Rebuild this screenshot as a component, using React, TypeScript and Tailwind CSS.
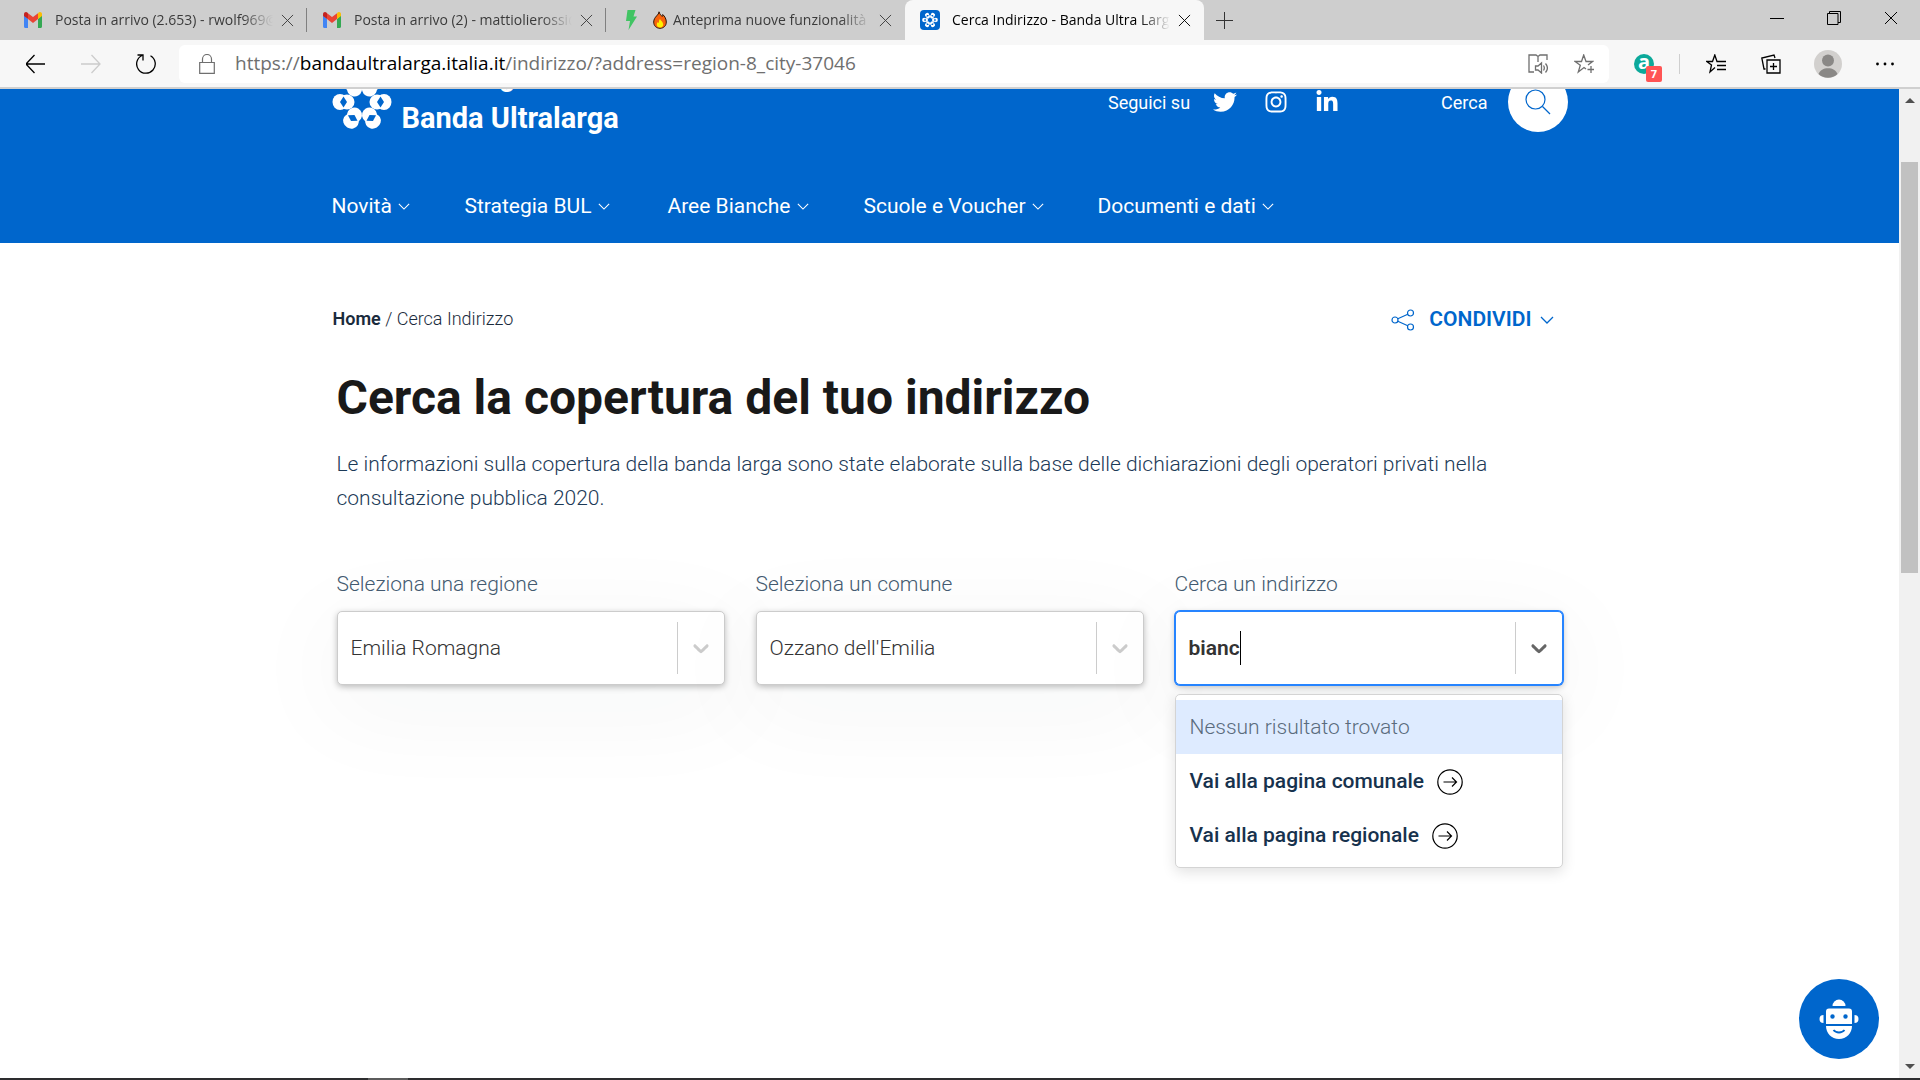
import type { ReactNode } from "react"
import clsx from "clsx"
import { FaInstagram, FaLinkedinIn, FaTwitter } from "react-icons/fa"

const GmailIcon = () => (
  <svg viewBox="0 0 20 16" className="w-[20px] h-[16px]">
    <path d="M1 3v11.5c0 .8.6 1.5 1.4 1.5H5V7z" fill="#4285f4" />
    <path d="M15 7v9h2.6c.8 0 1.4-.7 1.4-1.5V3z" fill="#34a853" />
    <path d="M15 1.6V7l4-3V2.2C19 .4 17-.6 15.6.6z" fill="#fbbc04" />
    <path d="M5 7V1.2l5 3.9 5-3.9V7l-5 4z" fill="#ea4335" />
    <path d="M1 2.2V4l4 3V1.2L4.4.6C3-.6 1 .4 1 2.2z" fill="#c5221f" />
  </svg>
)

const BoltIcon = () => (
  <svg viewBox="0 0 20 20" className="w-5 h-5">
    <path d="M6.500 0h8l-2 6.500h3.500L7.500 20l1.500-9H5z" fill="#41c463" />
  </svg>
)

const FlameIcon = () => (
  <svg viewBox="0 0 14 18" className="w-[14px] h-[18px] shrink-0">
    <path d="M6 .8c.6 2.300 2 3.200 3.200 4.700.5-.5.6-1.200.5-2 2.200 1.800 3.600 4.700 3.600 7.600 0 3.700-2.700 6.200-6.300 6.200S.7 14.800.7 11.100c0-2.800 1.400-4.500 2.900-6.200C4.800 3.600 5.900 2.500 6 .8z" fill="#f7630c" stroke="#2b1205" strokeWidth="1" />
    <path d="M7 8c.5 1.700 3.200 2.800 3.200 5.400 0 1.900-1.400 3.100-3.200 3.100s-3.200-1.200-3.200-3c0-1.100.5-2 1.200-2.600.2.700.5 1 .9 1.200C5.700 10.600 6.200 9 7 8z" fill="#fff100" />
  </svg>
)

const petals = [0, 60, 120, 180, 240, 300]

const Flower = ({ className }: { className?: string }) => (
  <svg viewBox="-30 -30 60 60" className={className} fill="currentColor">
    {petals.map((a) => (
      <g key={a} transform={`rotate(${a})`}>
        <ellipse cx="15" cy="0" rx="7.500" ry="7.500" />
        <ellipse cx="22" cy="0" rx="7.500" ry="8" />
        <path d="M18.500-5.500L22 0l-3.500 5.500L15 0z" fill="#0066cc" />
      </g>
    ))}
  </svg>
)

const SiteFavicon = () => (
  <span className="flex items-center justify-center w-5 h-5 rounded-sm bg-[#0066cc] text-white">
    <Flower className="w-4 h-4" />
  </span>
)

const Cross = ({ className }: { className?: string }) => (
  <svg viewBox="0 0 14 14" className={className} fill="none" stroke="currentColor">
    <path d="M1 1l12 12M13 1L1 13" />
  </svg>
)

const ThinChevron = ({ className }: { className?: string }) => (
  <svg viewBox="0 0 14 8" className={className} fill="none" stroke="currentColor" strokeWidth="1.300">
    <path d="M1 1l6 6 6-6" />
  </svg>
)

const CircleArrow = () => (
  <svg viewBox="0 0 26 26" className="w-[26px] h-[26px]" fill="none" stroke="#000" strokeWidth="1.200">
    <circle cx="13" cy="13" r="12.200" />
    <path d="M6.500 13h13M15 8.500l4.500 4.500-4.500 4.500" />
  </svg>
)

const tabs = [
  { title: "Posta in arrivo (2.653) - rwolf969@gmail.com", icon: <GmailIcon /> },
  { title: "Posta in arrivo (2) - mattiolierossi@gmail.com", icon: <GmailIcon /> },
  { title: "Anteprima nuove funzionalità in arrivo", icon: <BoltIcon />, flame: true },
  { title: "Cerca Indirizzo - Banda Ultra Larga", icon: <SiteFavicon />, active: true },
]

const TabStrip = () => (
  <div className="flex items-stretch h-10 pl-2 bg-[#cecece]">
    {tabs.map((tab, i) => (
      <div
        key={tab.title}
        className={clsx(
          "relative flex items-center gap-3 w-[299px] pl-[15px] pr-[13px] text-sm",
          tab.active ? "bg-[#f7f7f7] rounded-t-lg text-black" : "text-[#3b3b3b]"
        )}
      >
        {tab.icon}
        <span className="flex flex-1 items-center gap-[6px] min-w-0 overflow-hidden whitespace-nowrap [mask-image:linear-gradient(to_right,black_86%,transparent)]">
          {tab.flame && <FlameIcon />}
          {tab.title}
        </span>
        <button aria-label="Chiudi scheda" className="-ml-1">
          <Cross className="w-[13px] h-[13px]" />
        </button>
        {i < 2 && <span className="absolute right-0 top-2 h-6 w-px bg-[#808080]" />}
      </div>
    ))}
    <button aria-label="Nuova scheda" className="px-[12px] text-[#333]">
      <svg viewBox="0 0 17 17" className="w-[17px] h-[17px]" stroke="currentColor">
        <path d="M8.500 0v17M0 8.500h17" />
      </svg>
    </button>
    <div className="flex flex-1 justify-end items-center gap-[43px] pr-[22px] pb-1 text-black">
      <button aria-label="Riduci a icona" className="w-[14px] h-px bg-black" />
      <button aria-label="Ripristina">
        <svg viewBox="0 0 14 14" className="w-[14px] h-[14px]" fill="none" stroke="currentColor">
          <path d="M.5 2.500h10.500v11H.5zM2.500 2.500v-2h11v11h-2.500" />
        </svg>
      </button>
      <button aria-label="Chiudi">
        <Cross className="w-[14px] h-[14px]" />
      </button>
    </div>
  </div>
)

const ToolButton = ({ label, children, className }: { label: string; children: ReactNode; className?: string }) => (
  <button aria-label={label} className={clsx("shrink-0", className)}>
    <svg viewBox="0 0 20 20" className="w-5 h-5" fill="none" stroke="currentColor" strokeWidth="1.300">
      {children}
    </svg>
  </button>
)

const Toolbar = () => (
  <div className="flex items-center h-[49px] px-[26px] bg-[#f7f7f7] border-b-2 border-[#d0d0d0]">
    <div className="flex items-center gap-[35px] text-black">
      <ToolButton label="Indietro">
        <path d="M19 10H0M8.500 1L0 10l8.500 9" />
      </ToolButton>
      <ToolButton label="Avanti" className="text-[#cccccc]">
        <path d="M0 10h19M10.500 1l8.500 9-8.500 9" />
      </ToolButton>
      <ToolButton label="Aggiorna">
        <path d="M6 1.500a9.300 9.300 0 1 0 8.500.3M1.500 1H7v5.500" />
      </ToolButton>
    </div>
    <div className="flex flex-1 items-center h-[38px] ml-[23px] pl-[20px] pr-[15px] rounded-md bg-white text-[#6f6f6f]">
      <svg viewBox="0 0 16 20" className="w-[16px] h-[20px]" fill="none" stroke="currentColor" strokeWidth="1.200">
        <path d="M.7 8.500h14.600v10.800H.7zM3.500 8.500V5a4.500 4.500 0 0 1 9 0v3.500" />
      </svg>
      <span className="flex-1 ml-5 text-[19px] whitespace-nowrap">
        https://<span className="text-black">bandaultralarga.italia.it</span>/indirizzo/?address=region-8_city-37046
      </span>
      <div className="flex items-center gap-[26px]">
        <ToolButton label="Lettura ad alta voce">
          <path d="M6 18H1V1h7l2 1.500L12 1h7v5M10 2.500V8" />
          <path d="M7.500 12v4h2.500l3.500 3V9L10 12zM15.500 11.500c1 1.500 1 3.500 0 5M17.500 9.500c2.300 2.700 2.300 6.300 0 9" />
        </ToolButton>
        <ToolButton label="Aggiungi ai preferiti">
          <path d="M12 15l-2-1.500L4.300 18l2-6.800L1 7.500h6.500L9.700 1 12 7.500h6.500l-4.500 3.500M17 12v7M13.500 15.500h6.500" />
        </ToolButton>
      </div>
    </div>
    <div className="flex items-center ml-[25px] text-black">
      <button aria-label="Estensione" className="relative flex items-center justify-center w-5 h-5 rounded-full bg-[#0ca99a] text-white text-[20px] leading-none font-bold">
        <span className="pb-1">a</span>
        <span className="absolute left-3 top-3 flex items-center justify-center w-4 h-4 rounded-xs bg-[#ff5454] text-[11px]">
          7
        </span>
      </button>
      <span className="w-px h-5 ml-[25px] bg-[#cfcfcf]" />
      <ToolButton label="Preferiti" className="ml-[26px]">
        <path d="M9 13.500l-5 4.500 1.500-7L.7 7.500h5.800L8.800 1 11 7.500h9M11 11.500h9M11 15.500h9" />
      </ToolButton>
      <ToolButton label="Raccolte" className="ml-[35px]">
        <path d="M6 6h13v13H6zM12.500 9v7M9 12.500h7M4.500 15H3L.8 4 13 1l1 3" />
      </ToolButton>
      <button aria-label="Profilo" className="ml-[33px]">
        <svg viewBox="0 0 28 28" className="w-7 h-7">
          <circle cx="14" cy="14" r="14" fill="#d2d0ce" />
          <circle cx="14" cy="10.500" r="6" fill="#8a8886" />
          <path d="M4.500 24c1.500-4 5-5.800 9.500-5.800s8 1.800 9.500 5.800a14 14 0 0 1-19 0z" fill="#8a8886" />
        </svg>
      </button>
      <button aria-label="Impostazioni" className="ml-[34px]">
        <svg viewBox="0 0 18 4" className="w-[18px] h-1">
          <circle cx="1.500" cy="2" r="1.400" />
          <circle cx="9" cy="2" r="1.400" />
          <circle cx="16.500" cy="2" r="1.400" />
        </svg>
      </button>
    </div>
  </div>
)

const menu = [
  { label: "Novità", width: "w-[133px]" },
  { label: "Strategia BUL", width: "w-[203px]" },
  { label: "Aree Bianche", width: "w-[196px]" },
  { label: "Scuole e Voucher", width: "w-[234px]" },
  { label: "Documenti e dati", width: "w-[200px]" },
]

const SiteHeader = () => (
  <header className="bg-[#0066cc] text-white">
    <div className="max-w-[1236px] mx-auto">
      <div className="flex items-center h-16">
        <a href="#" className="flex items-center gap-[10px]">
          <Flower className="w-[60px] h-[60px]" />
          <span className="pb-2 text-[29px]">
            <span className="block mb-[18px] leading-[22px] font-medium">Italia Digitale</span>
            <span className="block leading-[26px] font-bold">Banda Ultralarga</span>
          </span>
        </a>
        <div className="flex items-center gap-[27px] ml-auto">
          <span className="-mr-1 text-[18px]">Seguici su</span>
          <a href="#" aria-label="Twitter"><FaTwitter className="w-6 h-6" /></a>
          <a href="#" aria-label="Instagram"><FaInstagram className="w-6 h-6" /></a>
          <a href="#" aria-label="LinkedIn"><FaLinkedinIn className="w-6 h-6" /></a>
        </div>
        <span className="ml-[102px] mr-5 text-[18px]">Cerca</span>
        <button aria-label="Cerca" className="flex items-center justify-center w-[60px] h-[60px] rounded-full bg-white text-[#0066cc]">
          <svg viewBox="0 0 26 26" className="w-[26px] h-[26px]" fill="none" stroke="currentColor" strokeWidth="1.200">
            <circle cx="10.500" cy="10.500" r="9.500" />
            <path d="M17.500 17.500l7.500 7.500" />
          </svg>
        </button>
      </div>
      <nav className="flex mt-9 h-[73px] text-[21px]">
        {menu.map((item) => (
          <a key={item.label} href="#" className={clsx("flex items-center gap-[6px] whitespace-nowrap", item.width)}>
            {item.label}
            <ThinChevron className="w-3 h-[7px]" />
          </a>
        ))}
      </nav>
    </div>
  </header>
)

const Indicator = ({ active }: { active?: boolean }) => (
  <>
    <span className="w-px h-[52px] shrink-0 bg-[#cccccc]" />
    <svg viewBox="0 0 20 20" className={clsx("w-[26px] h-[26px] mx-[10px] shrink-0", active ? "text-[#666666]" : "text-[#cccccc]")} fill="currentColor">
      <path d="M4.516 7.548c0.436-0.446 1.043-0.481 1.576 0l3.908 3.747 3.908-3.747c0.533-0.481 1.141-0.446 1.574 0 0.436 0.445 0.408 1.197 0 1.615-0.406 0.418-4.695 4.502-4.695 4.502-0.217 0.223-0.502 0.335-0.787 0.335s-0.570-0.112-0.789-0.335c0 0-4.287-4.084-4.695-4.502s-0.436-1.170 0-1.615z" />
    </svg>
  </>
)

const boxShadow = "shadow-[0_2px_6px_rgba(0,0,0,0.25),0_20px_100px_10px_rgba(0,43,55,0.04)]"

const SelectField = ({ id, label, value }: { id: string; label: string; value: string }) => (
  <div>
    <label htmlFor={id} className="block leading-[34px] text-[#435a70]">{label}</label>
    <div className={clsx("flex items-center h-[74px] mt-[10px] border border-[#cccccc] rounded-[5px] bg-white", boxShadow)}>
      <select id={id} defaultValue={value} className="flex-1 h-full pl-[13px] pt-[2px] appearance-none outline-none text-[#333333]">
        <option>{value}</option>
      </select>
      <Indicator />
    </div>
  </div>
)

const AddressField = () => (
  <div className="relative">
    <label htmlFor="indirizzo" className="block leading-[34px] text-[#435a70]">Cerca un indirizzo</label>
    <div className={clsx("h-[74px] mt-[10px] rounded-[5px]", boxShadow)}>
      <div className="flex items-center h-full border border-[#2684ff] ring-1 ring-[#2684ff] rounded-[5px] bg-white">
        <div className="flex flex-1 pl-[13px]">
          <input
            id="indirizzo"
            type="text"
            defaultValue="bianc"
            className="h-[34px] field-sizing-content border-r border-black outline-none font-semibold text-[#333333]"
          />
        </div>
        <Indicator active />
      </div>
    </div>
    <ul className="absolute z-10 inset-x-0 top-full mt-[9px] py-[5px] border border-[#d4d4d4] rounded-[5px] bg-white shadow-[0_4px_14px_rgba(0,0,0,0.12)]">
      <li className="flex items-center h-[54px] px-[14px] pt-[2px] bg-[#deebff] text-[#5a6b7d]">Nessun risultato trovato</li>
      {["Vai alla pagina comunale", "Vai alla pagina regionale"].map((text) => (
        <li key={text}>
          <a href="#" className="flex items-center gap-[13px] h-[54px] px-[14px] pt-[2px] font-medium text-[#17324d]">
            {text}
            <CircleArrow />
          </a>
        </li>
      ))}
    </ul>
  </div>
)

const ChatButton = () => (
  <button aria-label="Assistente" className="absolute right-5 bottom-[19px] flex items-center justify-center w-20 h-20 rounded-full bg-[#0066cc]">
    <svg viewBox="0 0 40 40" className="w-10 h-10">
      <g fill="#fff">
        <path d="M13.500 7a6.500 6.500 0 0 1 13 0z" />
        <path d="M7 12.500a3 3 0 0 1 3-3h20a3 3 0 0 1 3 3V25H7zM7 27h26c0 7-5.500 13-13 13S7 34 7 27z" />
        <path d="M4.500 16v8a4 4 0 0 1 0-8zM35.500 16v8a4 4 0 0 0 0-8z" />
      </g>
      <circle cx="13.500" cy="17.500" r="2.200" fill="#0066cc" />
      <circle cx="26.500" cy="17.500" r="2.200" fill="#0066cc" />
      <path d="M14.500 31c2.500 3.300 8.500 3.300 11 0" fill="none" stroke="#0066cc" strokeWidth="1.800" />
    </svg>
  </button>
)

const Scrollbar = () => (
  <div className="flex flex-col items-center w-[21px] shrink-0 bg-[#f1f1f1] text-[#505050]">
    <svg viewBox="0 0 10 5" className="w-[10px] h-[5px] my-[9px]" fill="currentColor">
      <path d="M5 0l5 5H0z" />
    </svg>
    <div className="flex flex-col flex-1 w-[17px] pt-[50px]">
      <div className="h-[46%] bg-[#c1c1c1]" />
    </div>
    <svg viewBox="0 0 10 5" className="w-[10px] h-[5px] my-[9px]" fill="currentColor">
      <path d="M5 5l5-5H0z" />
    </svg>
  </div>
)

export default function App() {
  return (
    <div className="flex flex-col h-screen overflow-hidden bg-white font-['Open_Sans',sans-serif]">
      <TabStrip />
      <Toolbar />
      <div className="relative flex flex-1 min-h-0">
        <div className="relative flex-1 overflow-hidden font-[Roboto,sans-serif]">
          {/* the page is scrolled down a little, so the top of the header is cut */}
          <div className="-mt-[19px]">
            <SiteHeader />
            <main className="max-w-[1238px] mx-auto">
              <div className="flex items-center justify-between h-10 mt-14 pl-[2px] pr-[15px]">
                <nav aria-label="Percorso" className="pb-[2px] text-[18px] font-light text-[#1a2b3c]">
                  <a href="#" className="font-semibold">Home</a> / Cerca Indirizzo
                </nav>
                <button className="flex items-center pt-[2px] text-[21px] font-semibold text-[#0066cc]">
                  <svg viewBox="0 0 24 22" className="w-6 h-[22px] mr-[14px]" fill="none" stroke="currentColor" strokeWidth="1.200">
                    <circle cx="4" cy="11" r="3" />
                    <circle cx="19.500" cy="4" r="3" />
                    <circle cx="19.500" cy="18" r="3" />
                    <path d="M6.800 9.700l10-4.500M6.800 12.300l10 4.500" />
                  </svg>
                  CONDIVIDI
                  <ThinChevron className="w-[14px] h-[8px] ml-2" />
                </button>
              </div>
              <div className="px-[6px] text-[21px] font-light">
                <h1 className="mt-[31px] text-[48px] leading-[56px] font-bold text-[#191919]">
                  Cerca la copertura del tuo indirizzo
                </h1>
                <p className="mt-[21px] leading-[34px] text-[#1c3a57]">
                  Le informazioni sulla copertura della banda larga sono state elaborate sulla base delle dichiarazioni degli
                  operatori privati nella consultazione pubblica 2020.
                </p>
                <div className="grid grid-cols-3 gap-[31px] mt-[52px]">
                  <SelectField id="regione" label="Seleziona una regione" value="Emilia Romagna" />
                  <SelectField id="comune" label="Seleziona un comune" value="Ozzano dell'Emilia" />
                  <AddressField />
                </div>
              </div>
            </main>
          </div>
          <ChatButton />
        </div>
        <Scrollbar />
      </div>
      <div className="h-[2px] pl-[368px] bg-[#2d2d2f]">
        <div className="w-10 h-full bg-[#5c5c5c]" />
      </div>
    </div>
  )
}
